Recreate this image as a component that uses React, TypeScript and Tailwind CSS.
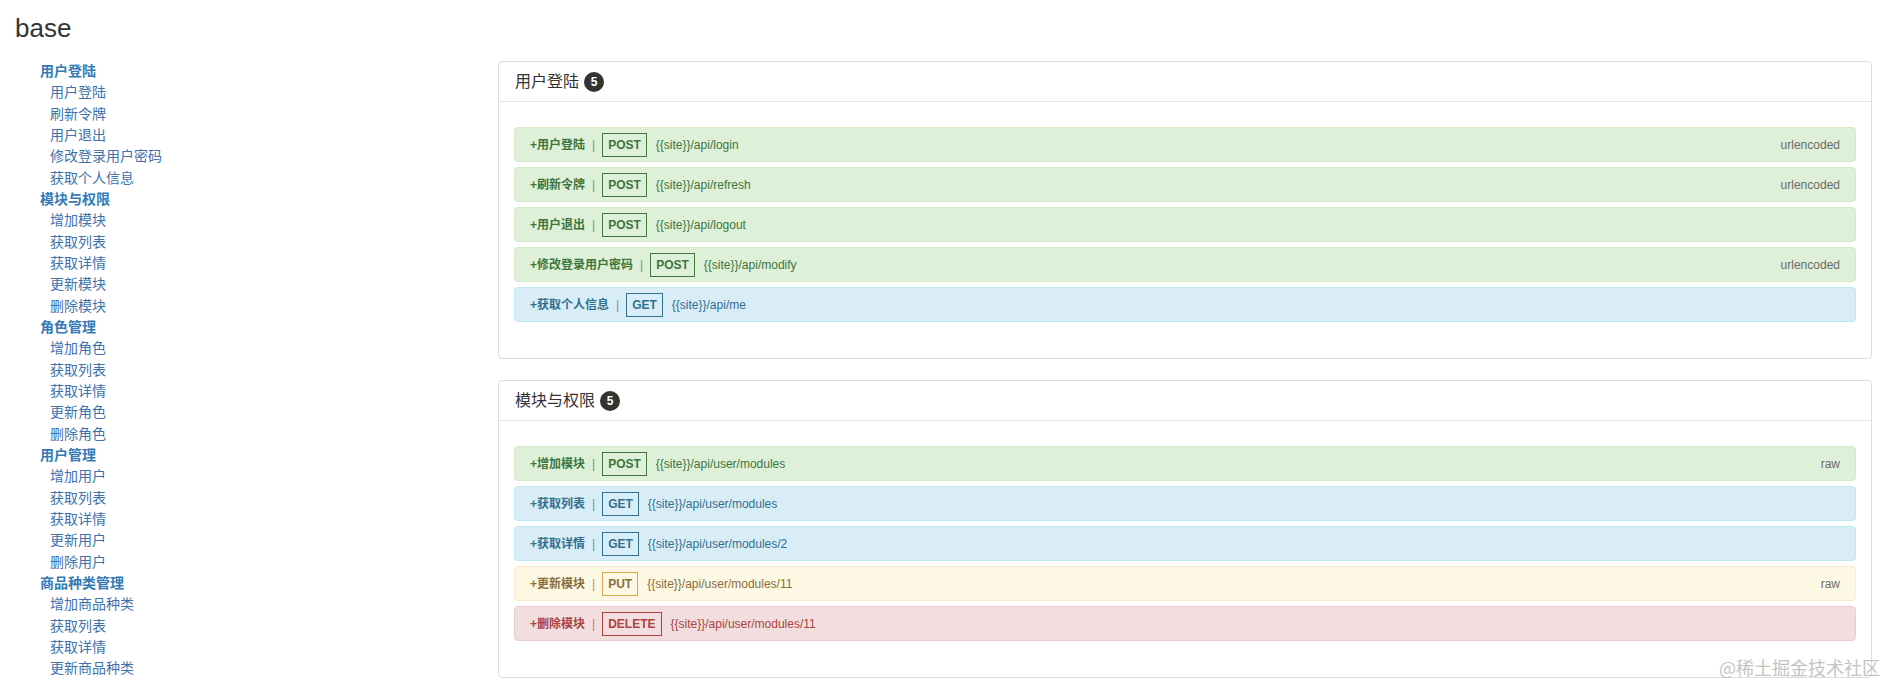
import React from 'react';

type Method = 'POST' | 'GET' | 'PUT' | 'DELETE';

interface Api {
    name: string;
    method: Method;
    url: string;
    type?: string;
}

interface Group {
    title: string;
    apis: Api[];
}

// Bootstrap alert colours per method
const methodStyle: Record<Method, { row: string; box: string }> = {
    POST: { row: 'bg-[#dff0d8] border-[#d6e9c6] text-[#3c763d]', box: 'border-[#3c763d]' },
    GET: { row: 'bg-[#d9edf7] border-[#bce8f1] text-[#31708f]', box: 'border-[#31708f]' },
    PUT: { row: 'bg-[#fcf8e3] border-[#faebcc] text-[#8a6d3b]', box: 'border-[#d9a84a]' },
    DELETE: { row: 'bg-[#f2dede] border-[#ebccd1] text-[#a94442]', box: 'border-[#a94442]' },
};

const groups: Group[] = [
    {
        title: '用户登陆',
        apis: [
            { name: '用户登陆', method: 'POST', url: '{{site}}/api/login', type: 'urlencoded' },
            { name: '刷新令牌', method: 'POST', url: '{{site}}/api/refresh', type: 'urlencoded' },
            { name: '用户退出', method: 'POST', url: '{{site}}/api/logout' },
            { name: '修改登录用户密码', method: 'POST', url: '{{site}}/api/modify', type: 'urlencoded' },
            { name: '获取个人信息', method: 'GET', url: '{{site}}/api/me' },
        ],
    },
    {
        title: '模块与权限',
        apis: [
            { name: '增加模块', method: 'POST', url: '{{site}}/api/user/modules', type: 'raw' },
            { name: '获取列表', method: 'GET', url: '{{site}}/api/user/modules' },
            { name: '获取详情', method: 'GET', url: '{{site}}/api/user/modules/2' },
            { name: '更新模块', method: 'PUT', url: '{{site}}/api/user/modules/11', type: 'raw' },
            { name: '删除模块', method: 'DELETE', url: '{{site}}/api/user/modules/11' },
        ],
    },
];

const nav: { title: string; items: string[] }[] = [
    { title: '用户登陆', items: ['用户登陆', '刷新令牌', '用户退出', '修改登录用户密码', '获取个人信息'] },
    { title: '模块与权限', items: ['增加模块', '获取列表', '获取详情', '更新模块', '删除模块'] },
    { title: '角色管理', items: ['增加角色', '获取列表', '获取详情', '更新角色', '删除角色'] },
    { title: '用户管理', items: ['增加用户', '获取列表', '获取详情', '更新用户', '删除用户'] },
    { title: '商品种类管理', items: ['增加商品种类', '获取列表', '获取详情', '更新商品种类'] },
];

const ApiRow = ({ api }: { api: Api }) => {
    const s = methodStyle[api.method];
    return (
        <div className={`flex items-center h-[35px] mb-[5px] last:mb-0 px-[15px] border rounded-[4px] text-[12px] ${s.row}`}>
            <span className="font-bold">+{api.name}</span>
            <span className="mx-[7px] opacity-70">|</span>
            <span className={`flex items-center h-[24px] px-[5px] border font-bold text-[12px] ${s.box}`}>{api.method}</span>
            <span className="ml-[9px]">{api.url}</span>
            {api.type && <span className="ml-auto text-[#6b6b6b]">{api.type}</span>}
        </div>
    );
};

const Panel = ({ group }: { group: Group }) => (
    <div className="border border-[#ddd] rounded-[4px] bg-white mb-[21px]">
        <div className="flex items-center h-[40px] px-[16px] border-b border-[#e5e5e5]">
            <span className="text-[16px] text-[#333]">{group.title}</span>
            <span className="ml-[5px] w-[20px] h-[20px] rounded-full bg-[#333] text-white text-[12px] font-bold flex items-center justify-center">
                {group.apis.length}
            </span>
        </div>
        <div className="px-[15px] pt-[25px] pb-[36px]">
            {group.apis.map(api => (
                <ApiRow key={api.name + api.url} api={api} />
            ))}
        </div>
    </div>
);

export default function App() {
    return (
        <div
            className="relative h-[683px] overflow-hidden bg-white text-[#333]"
            style={{ fontFamily: '"Liberation Sans", Arial, "Noto Sans CJK SC", sans-serif' }}
        >
            <div className="pl-[15px] pt-[14px] pb-[18px] text-[26px] leading-[29px]">base</div>

            <div className="flex">
                {/* 左侧目录 */}
                <div className="w-[498px] shrink-0 pl-[40px] text-[14px] leading-[21.33px] text-[#337ab7]">
                    {nav.map(sec => (
                        <div key={sec.title}>
                            <div className="font-bold">{sec.title}</div>
                            {sec.items.map((it, i) => (
                                <div key={i} className="pl-[10px] text-[#3d72ad]">{it}</div>
                            ))}
                        </div>
                    ))}
                </div>

                {/* 接口列表 */}
                <div className="flex-1 pr-[14px]">
                    {groups.map(g => (
                        <Panel key={g.title} group={g} />
                    ))}
                </div>
            </div>

            <div
                className="absolute right-[6px] bottom-[7px] text-[18px] leading-[18px] text-[#c4c4c4]"
                style={{ fontFamily: '"Noto Sans CJK SC", sans-serif' }}
            >
                @稀土掘金技术社区
            </div>
        </div>
    );
}
